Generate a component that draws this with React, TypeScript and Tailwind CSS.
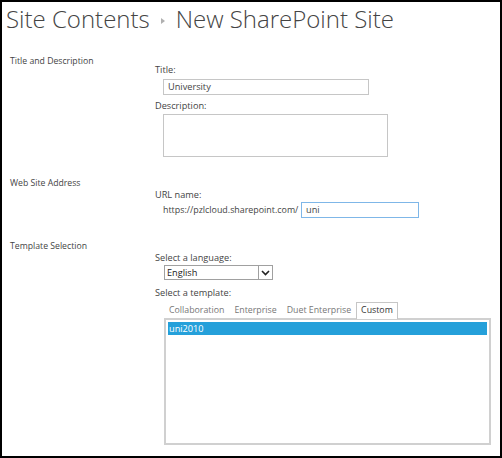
import React from 'react';

const font = { fontFamily: '"Open Sans", "Liberation Sans", sans-serif' };

function Section({ label, children, className = '' }: { label: string; children: React.ReactNode; className?: string }) {
  return (
    <div className={`flex ${className}`}>
      <div className="w-[153px] shrink-0 pl-[8px] text-[8.7px] leading-[14px] text-[#444]">{label}</div>
      <div className="flex-1">{children}</div>
    </div>
  );
}

const tabs = ['Collaboration', 'Enterprise', 'Duet Enterprise', 'Custom'];

export default function App() {
  return (
    <div className="w-[502px] h-[458px] bg-white border-2 border-black overflow-hidden" style={font}>
      {/* 見出し */}
      <div className="flex items-center h-[34px] pl-[4px] text-[24px] font-light text-[#444] leading-none whitespace-nowrap">
        <span>Site Contents</span>
        <svg width="6" height="8" viewBox="0 0 6 8" className="mx-[10px] mt-[3px]">
          <path d="M1 1 L5 4 L1 7 Z" fill="#b0b0b0" />
        </svg>
        <span>New SharePoint Site</span>
      </div>

      {/* タイトル */}
      <Section label="Title and Description" className="mt-[18px]">
        <div className="pt-[9px] text-[9.2px] leading-[14px] text-[#444]">
          <div>Title:</div>
          <div className="ml-[8px] mt-[2px] w-[206px] h-[16px] border border-[#c6c6c6] px-[4px] leading-[14px]">University</div>
          <div className="mt-[4px]">Description:</div>
          <div className="ml-[8px] mt-[1px] w-[225px] h-[43px] border border-[#c6c6c6]" />
        </div>
      </Section>

      {/* URL */}
      <Section label="Web Site Address" className="mt-[19px]">
        <div className="pt-[12px] text-[9.2px] leading-[14px] text-[#444]">
          <div>URL name:</div>
          <div className="flex items-center ml-[8px]">
            <span className="w-[138px] whitespace-nowrap text-[8.9px]">https://pzlcloud.sharepoint.com/</span>
            <div className="w-[118px] h-[16px] border border-[#7fb7e8] px-[4px] leading-[14px]">uni</div>
          </div>
        </div>
      </Section>

      {/* テンプレート */}
      <Section label="Template Selection" className="mt-[21px]">
        <div className="pt-[12px] text-[9.2px] leading-[14px] text-[#444]">
          <div>Select a language:</div>
          <div className="ml-[9px] w-[109px] h-[15px] border border-[#a0a0a0] flex items-center">
            <span className="flex-1 pl-[2px] text-[#222] leading-[13px]">English</span>
            <div className="w-[14px] h-full border-l border-[#a0a0a0] flex items-center justify-center">
              <svg width="9" height="6" viewBox="0 0 9 6">
                <path d="M1 1 L4.5 4.5 L8 1" fill="none" stroke="#222" strokeWidth="1.6" />
              </svg>
            </div>
          </div>
          <div className="mt-[6px]">Select a template:</div>
          <div className="ml-[9px] mt-[2px] flex text-[#777] text-[8.8px] h-[16px] items-end">
            {tabs.map(t =>
              t === 'Custom' ? (
                <div key={t} className="px-[4px] h-[17px] border border-b-0 border-[#c6c6c6] bg-white text-[#333] leading-[15px] relative top-[1px]">
                  {t}
                </div>
              ) : (
                <div key={t} className="px-[5px] leading-[15px]">{t}</div>
              )
            )}
          </div>
          <div className="ml-[9px] w-[327px] h-[127px] border-2 border-[#d0d0d0] p-[2px]">
            <div className="h-[13px] bg-[#25a0da] text-white pl-[1px] leading-[13px]">uni2010</div>
          </div>
        </div>
      </Section>
    </div>
  );
}
